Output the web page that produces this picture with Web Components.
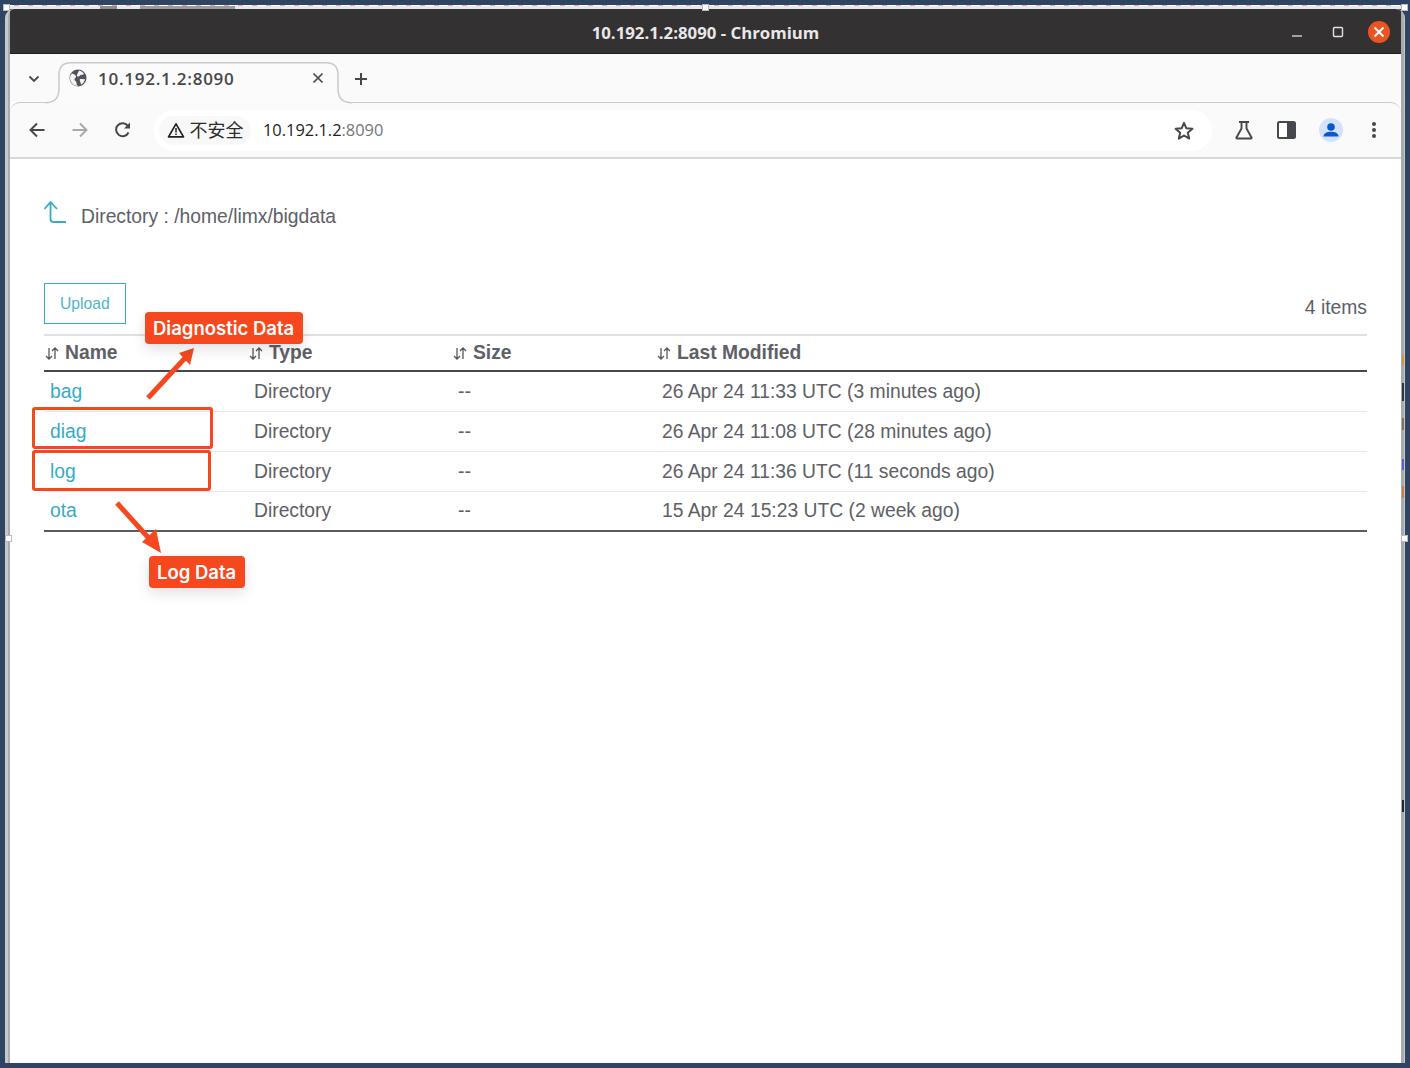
<!DOCTYPE html>
<html>
<head>
<meta charset="utf-8">
<title>10.192.1.2:8090 - Chromium</title>
<style>
  html, body { margin: 0; height: 100%; background: #2f4463; }
  body { font-family: "Liberation Sans", Arial, sans-serif; }
</style>
</head>
<body>
<browser-window>
  <file-browser path="/home/limx/bigdata"></file-browser>
</browser-window>

<script>
/**
 * Chromium window frame: title bar, tab strip and toolbar, page in the slot.
 */
class BrowserWindow extends HTMLElement {
    constructor() {
        super();
        this.attachShadow({mode: 'open'});
        // Bits of the windows behind this one, and the handles of the screenshot selection.
        const handles = [[3, 4], [702, 4], [1401, 4], [5, 535], [1401, 535]];
        const marks = [
            [355, 10, '#d9962f'], [383, 18, '#30343a'], [418, 12, '#8a6d55'],
            [459, 11, '#5a5fd0'], [486, 12, '#c9803a'], [800, 12, '#22262b'],
        ];
        this.shadowRoot.innerHTML = `
        <style>
          :host { display: block; height: 1068px; box-sizing: border-box; padding: 5px 5px 5px 5px; position: relative; }
          .selection { height: 1px; background: repeating-linear-gradient(90deg, #fff 0 9px, #eda6ad 9px 14px); }
          .behind {
            height: 3px;
            background:
              linear-gradient(90deg, transparent 95px, #8b8d90 95px 112px, transparent 112px 135px, #9a9b9e 135px 230px, transparent 230px),
              #e6e7e8;
          }
          .frame {
            box-sizing: border-box; height: 1054px; border: solid #c6c8ca; border-width: 0 1px 0 3px;
            border-top-left-radius: 9px; border-top-right-radius: 9px; overflow: hidden;
          }
          .win {
            box-sizing: border-box; height: 100%; background: #fff;
            border: solid #a9aaac; border-width: 0 3px 0 2px;
            display: flex; flex-direction: column;
          }
          .title {
            height: 45px; flex: none; box-sizing: border-box; padding-top: 3px; background: #333131; color: #e8e8e8;
            position: relative; display: flex; align-items: center; justify-content: center;
            font: bold 16.8px "Open Sans", "Noto Sans", sans-serif; border-bottom: 1px solid #1f1e1e;
          }
          .controls { position: absolute; right: 10px; top: 11px; display: flex; align-items: center; }
          .controls svg { display: block; }
          .controls svg:nth-child(1) { margin-right: 21px; }
          .controls svg:nth-child(2) { margin-right: 17px; }
          .tabs {
            height: 48px; flex: none; background: #fafafa; position: relative; z-index: 1;
            display: flex; align-items: flex-start;
          }
          .chev { width: 49px; flex: none; display: flex; justify-content: center; padding: 21px 2px 0 0; box-sizing: border-box; }
          .tab {
            width: 279px; height: 41px; margin-top: 8px; flex: none; box-sizing: border-box;
            display: flex; align-items: center; padding: 0 14px 9px 10px; gap: 11px;
            font: 600 17px "Open Sans", "Noto Sans", sans-serif; color: #45484c; letter-spacing: .73px;
            position: relative;
          }
          .tab > svg { position: relative; }
          .tab .shape { position: absolute; left: -14px; top: 0; }
          .tab span { flex: 1; position: relative; }
          .plus { margin: 18px 0 0 16px; }
          .toolbar {
            height: 57px; flex: none; background: #fafafa; display: flex; align-items: center;
            border-top: 1.5px solid #c9cacb; border-bottom: 2px solid #d8d9da; box-sizing: border-box;
            border-radius: 10px 10px 0 0; padding-left: 19px;
          }
          .nav { display: flex; align-items: center; gap: 27px; margin-right: 23px; }
          .nav svg { display: block; }
          .omni {
            width: 1058px; height: 41px; border-radius: 21px; background: #fff; display: flex; align-items: center;
            box-sizing: border-box; padding-left: 5px; flex: none;
          }
          .secure {
            height: 29px; width: 92px; border-radius: 15px; background: #f8f8f8; display: flex; align-items: center; justify-content: center;
            gap: 5px; box-sizing: border-box; font: 18px "Noto Sans CJK SC", sans-serif; color: #2c2c2c; flex: none;
          }
          .secure span { margin-top: -2px; }
          .url { margin-left: 12px; margin-top: -1px; font: 16.4px "Open Sans", sans-serif; color: #1f2124; flex: 1; }
          .url i { font-style: normal; color: #72767b; }
          .star { margin-right: 18px; display: block; }
          .tools { display: flex; align-items: center; gap: 23px; margin-left: 22px; }
          .tools svg { display: block; }
          .tools svg:last-child { margin-left: 5px; }
          .page { flex: 1; position: relative; min-height: 0; }
          .handle { position: absolute; width: 5px; height: 5px; background: #fff; border: 1px solid #b9bbbd; }
          .smear { position: absolute; left: 1402px; width: 2px; }
        </style>
        <div class="selection"></div>
        <div class="behind"></div>
        <div class="frame"><div class="win">
          <div class="title">
            10.192.1.2:8090 - Chromium
            <div class="controls">
              <svg width="16" height="16" viewBox="0 0 16 16"><path d="M3 12h10" stroke="#c9c9c9" stroke-width="1.3"/></svg>
              <svg width="24" height="24" viewBox="0 0 24 24"><rect x="7.500" y="7.500" width="9" height="9" rx="1" fill="none" stroke="#e2e2e2" stroke-width="1.4"/></svg>
              <svg width="24" height="24" viewBox="0 0 24 24"><circle cx="12" cy="12" r="11" fill="#ea5420"/><path d="M7.5 7.5l9 9M16.5 7.5l-9 9" stroke="#fff" stroke-width="2"/></svg>
            </div>
          </div>
          <div class="tabs">
            <div class="chev"><svg width="12" height="8" viewBox="0 0 12 8"><path d="M1.5 1.5L6 6l4.500-4.500" fill="none" stroke="#45484c" stroke-width="1.8"/></svg></div>
            <div class="tab">
              <svg class="shape" width="307" height="42" viewBox="0 0 307 42"><path d="M0 42V40.700Q14 40.700 14 26.700V13Q14 .8 26 .8H281Q293 .8 293 13V26.700Q293 40.700 307 40.700V42z" fill="#fbfbfb"/><path d="M0 40.700Q14 40.700 14 26.700V13Q14 .8 26 .8H281Q293 .8 293 13V26.700Q293 40.700 307 40.700" fill="none" stroke="#c9cacb" stroke-width="1.500"/></svg>
              <svg width="18" height="18" viewBox="0 0 18 18"><circle cx="9" cy="9" r="8.5" fill="#50535a"/><path d="M3 4.500C5 5 7 6 7 7.500S5.500 9 5.500 10.500 7.500 12 7.500 14 8.500 16.500 9 17C5 17 1 13.500 1 9c0-1.700.8-3.300 2-4.500zM10 1.500c2 .5 4 1.500 5 3.500-1 1-2.500.5-3.500 1S10 8 8.500 7.500 9 4 10 1.500zM11.500 10c1.500 0 3 .5 4.500 0-.5 2.500-1.500 4-3.500 5.500-1-1-1-2.500-1.500-3.500s-.5-2 .5-2z" fill="#f5f5f5"/></svg>
              <span>10.192.1.2:8090</span>
              <svg width="12" height="12" viewBox="0 0 12 12"><path d="M1.500 1.500l9 9M10.500 1.500l-9 9" stroke="#45484c" stroke-width="1.700"/></svg>
            </div>
            <svg class="plus" width="14" height="14" viewBox="0 0 14 14"><path d="M7 1v12M1 7h12" stroke="#45484c" stroke-width="2"/></svg>
          </div>
          <div class="toolbar">
            <div class="nav">
              <svg width="16" height="16" viewBox="0 0 16 16"><path d="M15.500 8H2M8 1.500L1.500 8 8 14.500" fill="none" stroke="#45484c" stroke-width="2"/></svg>
              <svg width="16" height="16" viewBox="0 0 16 16"><path d="M.5 8H14M8 1.500L14.500 8 8 14.500" fill="none" stroke="#a7a9ac" stroke-width="2"/></svg>
              <svg width="16" height="16" viewBox="0 0 16 16"><path d="M13.500 10.500A6.500 6.500 0 1 1 13 4" fill="none" stroke="#45484c" stroke-width="2"/><path d="M15 .5V6.500H9z" fill="#45484c"/></svg>
            </div>
            <div class="omni">
              <div class="secure">
                <svg width="18" height="16" viewBox="0 0 18 16"><path d="M9 1.800L16.500 14.800H1.500z" fill="none" stroke="#222" stroke-width="1.700" stroke-linejoin="round"/><path d="M9 6v4.500M9 11.500v1.500" stroke="#222" stroke-width="1.500"/></svg>
                <span>不安全</span>
              </div>
              <div class="url">10.192.1.2<i>:8090</i></div>
              <svg class="star" width="20" height="19" viewBox="0 0 20 19"><path d="M10 1.800l2.400 5.500 6 .5-4.600 3.900 1.400 5.900L10 14.500l-5.200 3.100 1.400-5.900L1.600 7.800l6-.5z" fill="none" stroke="#45484c" stroke-width="2" stroke-linejoin="round"/></svg>
            </div>
            <div class="tools">
              <svg width="20" height="20" viewBox="0 0 20 20"><path d="M5 2h10M7.500 2v6.500L2.500 17.500a.6.6 0 0 0 .5 1h14a.6.6 0 0 0 .5-1l-5-9V2" fill="none" stroke="#45484c" stroke-width="1.900" stroke-linejoin="round"/></svg>
              <svg width="19" height="18" viewBox="0 0 19 18"><rect x="1" y="1" width="17" height="16" rx="1.500" fill="#fff" stroke="#45484c" stroke-width="2"/><rect x="10" y="1" width="8" height="16" fill="#45484c"/></svg>
              <svg width="24" height="24" viewBox="0 0 24 24"><circle cx="12" cy="12" r="12" fill="#d3e3fd"/><circle cx="12" cy="9" r="3.800" fill="#0b57d0"/><path d="M4.500 18.500c0-3.500 4-4.800 7.500-4.800s7.500 1.300 7.500 4.800z" fill="#0b57d0"/></svg>
              <svg width="6" height="18" viewBox="0 0 6 18"><circle cx="3" cy="3" r="2" fill="#45484c"/><circle cx="3" cy="9" r="2" fill="#45484c"/><circle cx="3" cy="15" r="2" fill="#45484c"/></svg>
            </div>
          </div>
          <div class="page"><slot></slot></div>
        </div></div>
        ${marks.map(m => `<div class="smear" style="top:${m[0]}px;height:${m[1]}px;background:${m[2]}"></div>`).join('')}
        ${handles.map(h => `<div class="handle" style="left:${h[0]}px;top:${h[1]}px"></div>`).join('')}`;
    }
}

/**
 * Directory listing with the red callouts drawn over it.
 */
class FileBrowser extends HTMLElement {
    constructor() {
        super();
        this.attachShadow({mode: 'open'});
        const rows = [
            ['bag', 'Directory', '--', '26 Apr 24 11:33 UTC (3 minutes ago)'],
            ['diag', 'Directory', '--', '26 Apr 24 11:08 UTC (28 minutes ago)'],
            ['log', 'Directory', '--', '26 Apr 24 11:36 UTC (11 seconds ago)'],
            ['ota', 'Directory', '--', '15 Apr 24 15:23 UTC (2 week ago)'],
        ];
        const sort = `<svg width="14" height="13" viewBox="0 0 14 13"><path d="M4 1v11M1 9l3 3 3-3M10 12V1M7 4l3-3 3 3" fill="none" stroke="#55585c" stroke-width="1.300"/></svg>`;
        this.shadowRoot.innerHTML = `
        <style>
          :host {
            display: block; height: 100%; position: relative; box-sizing: border-box;
            padding: 39px 34px 0 34px; font: 19.3px "Liberation Sans", Arial, sans-serif; color: #5d6066;
          }
          a { color: #35abc6; text-decoration: none; }
          .crumb { display: flex; align-items: flex-start; height: 85px; }
          .crumb svg { display: block; margin-top: 2px; flex: none; }
          .crumb span { margin-left: 13px; margin-top: 8px; }
          .actions { display: flex; align-items: center; justify-content: space-between; height: 41px; margin-bottom: 10px; }
          .upload {
            width: 81.5px; height: 41px; box-sizing: border-box; border: 1.5px solid #35abc6; color: #4cb5cd;
            display: flex; align-items: center; justify-content: center; font-size: 15.7px;
          }
          .count { margin-top: 8px; }
          .row { display: grid; grid-template-columns: 204px 204px 204px 1fr; height: 40px; box-sizing: border-box; align-items: center; border-bottom: 1.5px solid #e6e8ec; }
          .row > div { padding: 1px 0 0 6px; }
          .head { height: 37.5px; border-top: 2px solid #dfe1e5; border-bottom: 2px solid #46484c; font-weight: bold; }
          .head > div { display: flex; align-items: center; gap: 6px; padding: 1px 0 0 1px; }
          .row.last { border-bottom: 2px solid #5a5c60; }
          callout-label { position: absolute; }
          svg.over { position: absolute; left: 0; top: 0; pointer-events: none; overflow: visible; }
          .mark { position: absolute; box-sizing: border-box; border: 3px solid #f5481f; border-radius: 3px; }
        </style>
        <div class="crumb">
          <svg width="24" height="24" viewBox="0 0 24 24"><path d="M22 22H9.500Q6.500 22 6.500 19V2M.5 9l6-7 6.500 7" fill="none" stroke="#35abc6" stroke-width="1.800"/></svg>
          <span>Directory : ${this.getAttribute('path')}</span>
        </div>
        <div class="actions">
          <a class="upload">Upload</a>
          <div class="count">4 items</div>
        </div>
        <div class="row head">
          <div>${sort}Name</div><div>${sort}Type</div><div>${sort}Size</div><div>${sort}Last Modified</div>
        </div>
        ${rows.map((r, i) => `<div class="row${i === rows.length - 1 ? ' last' : ''}"><div><a>${r[0]}</a></div><div>${r[1]}</div><div>${r[2]}</div><div>${r[3]}</div></div>`).join('')}
        <div class="mark" style="left:22px;top:248px;width:181px;height:42px"></div>
        <div class="mark" style="left:22px;top:291px;width:179px;height:41px"></div>
        <svg class="over" width="300" height="440">
          <path d="M138 239L176 198" stroke="#f5481f" stroke-width="5"/>
          <path d="M184 189L169 194L180 206z" fill="#f5481f"/>
          <path d="M107 344L145 386" stroke="#f5481f" stroke-width="5"/>
          <path d="M151 394L146 370L132 383z" fill="#f5481f"/>
        </svg>
        <callout-label style="left:135px;top:153px">Diagnostic Data</callout-label>
        <callout-label style="left:139px;top:397px">Log Data</callout-label>`;
    }
}

/**
 * Orange label of a callout.
 */
class CalloutLabel extends HTMLElement {
    constructor() {
        super();
        this.attachShadow({mode: 'open'});
        this.shadowRoot.innerHTML = `
        <style>
          :host {
            display: block; background: #f5481f; color: #fff; border-radius: 4px; padding: 0 9px 0 8px;
            height: 32px; font: 600 18.5px/32px Inter, Roboto, sans-serif;
            box-shadow: 0 5px 14px rgba(0,0,0,.12); white-space: nowrap;
          }
        </style>
        <slot></slot>`;
    }
}

window.customElements.define('callout-label', CalloutLabel);
window.customElements.define('file-browser', FileBrowser);
window.customElements.define('browser-window', BrowserWindow);
</script>
</body>
</html>
